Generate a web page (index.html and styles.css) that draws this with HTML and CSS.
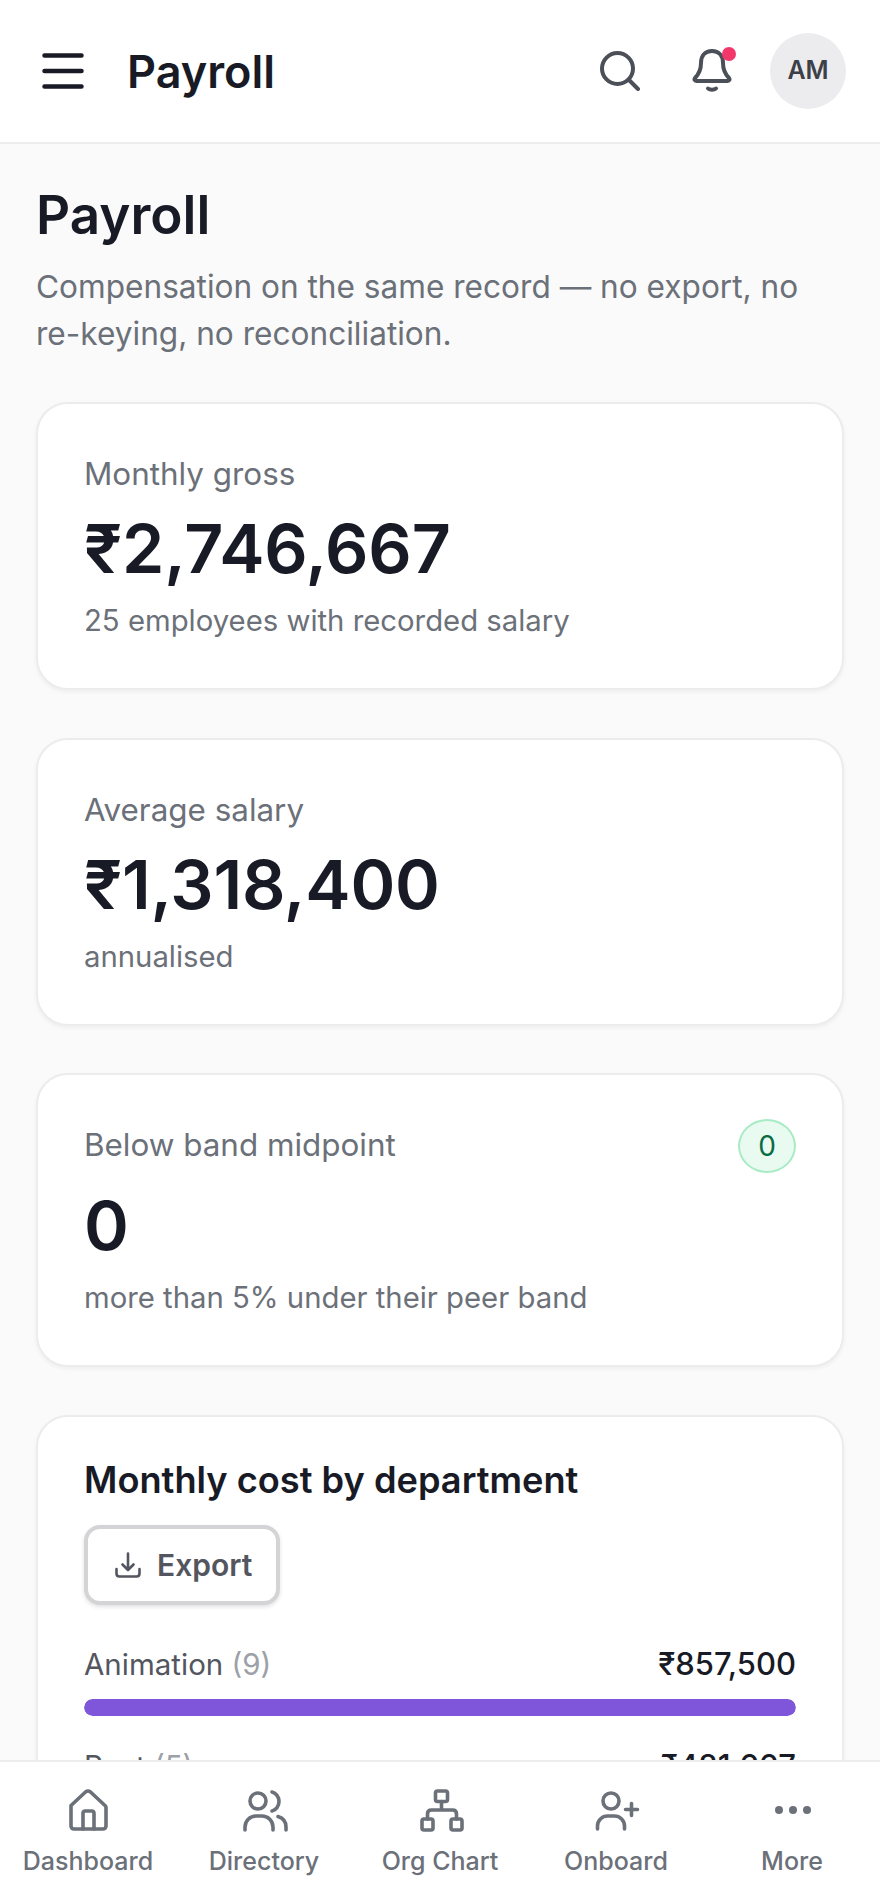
FILE: index.html
```html
<!DOCTYPE html>
<html lang="en">
<head>
    <meta charset="UTF-8">
    <meta name="viewport" content="width=device-width, initial-scale=1.0">
    <link rel="stylesheet" href="styles.css">
    <title>Payroll</title>
</head>
<body>
    <header class="topbar">
        <svg class="menu-icon" viewBox="0 0 42 36" fill="none" stroke="currentColor" stroke-width="4.500" stroke-linecap="round">
            <path d="M2.500 2.500h37M2.500 18h37M2.500 33.500h37"/>
        </svg>
        <div class="topbar-title">Payroll</div>
        <svg class="search-icon" viewBox="0 0 40 40" fill="none" stroke="currentColor" stroke-width="4" stroke-linecap="round">
            <circle cx="17.500" cy="17.500" r="15.500"/>
            <path d="M29 29l9 9"/>
        </svg>
        <div class="bell">
            <svg class="bell-icon" viewBox="0 0 40 44" fill="none" stroke="currentColor" stroke-width="4" stroke-linecap="round" stroke-linejoin="round">
                <path d="M20 2c-7 0-11 5-11 12 0 7-2 11-6 15-1 1.500-.5 3 1.500 3h31c2 0 2.500-1.500 1.500-3-4-4-6-8-6-15 0-7-4-12-11-12z"/>
                <path d="M16 39.500c2 1.500 6 1.500 8 0"/>
            </svg>
            <span class="bell-dot"></span>
        </div>
        <div class="avatar">AM</div>
    </header>

    <main class="content">
        <h1>Payroll</h1>
        <p class="intro">Compensation on the same record — no export, no <span class="nowrap">re-keying,</span> no reconciliation.</p>

        <section class="card">
            <div class="stat-label">Monthly gross</div>
            <div class="stat-value">₹2,746,667</div>
            <div class="stat-note">25 employees with recorded salary</div>
        </section>

        <section class="card">
            <div class="stat-label">Average salary</div>
            <div class="stat-value">₹1,318,400</div>
            <div class="stat-note">annualised</div>
        </section>

        <section class="card">
            <div class="stat-head">
                <div class="stat-label">Below band midpoint</div>
                <span class="pill">0</span>
            </div>
            <div class="stat-value">0</div>
            <div class="stat-note">more than 5% under their peer band</div>
        </section>

        <section class="card card-table">
            <h2>Monthly cost by department</h2>
            <button class="export" type="button">
                <svg class="export-icon" viewBox="0 0 26 26" fill="none" stroke="currentColor" stroke-width="2.600" stroke-linecap="round" stroke-linejoin="round">
                    <path d="M13 1.500v16M7.500 12.500l5.500 5.500 5.500-5.500M1.500 17v4.500c0 1.700 1.200 3 3 3h17c1.800 0 3-1.300 3-3V17"/>
                </svg>
                Export
            </button>
            <div class="dept">
                <div class="dept-row"><span>Animation <em>(9)</em></span><b>₹857,500</b></div>
                <div class="bar"><div class="bar-fill" style="width: 100%"></div></div>
            </div>
            <div class="dept">
                <div class="dept-row"><span>Post <em>(5)</em></span><b>₹481,667</b></div>
                <div class="bar"><div class="bar-fill" style="width: 56%"></div></div>
            </div>
        </section>
    </main>

    <nav class="tabs">
        <a class="tab">
            <svg viewBox="0 0 48 48" fill="none" stroke="currentColor" stroke-width="3.600" stroke-linecap="round" stroke-linejoin="round">
                <path d="M7 19.500L21.500 6c1.500-1.200 3.500-1.200 5 0L41 19.500c.7.700 1 1 1 2V40c0 1.700-1.300 3-3 3H10c-1.700 0-3-1.300-3-3V21.500c0-1 0-1.300 0-2z"/>
                <path d="M19 43V27c0-1 1-2 2-2h7c1 0 2 1 2 2v16"/>
            </svg>
            Dashboard
        </a>
        <a class="tab">
            <svg viewBox="0 0 48 48" fill="none" stroke="currentColor" stroke-width="3.600" stroke-linecap="round" stroke-linejoin="round">
                <circle cx="18" cy="15" r="8"/>
                <path d="M5 44v-3a11 11 0 0 1 11-11h6a11 11 0 0 1 11 11v3"/>
                <path d="M32 6c4 1 7 5 7 9.500s-3 8.500-7 9.500M38 30.500c5 1.500 8 5.500 8 10.500v3"/>
            </svg>
            Directory
        </a>
        <a class="tab">
            <svg viewBox="0 0 48 48" fill="none" stroke="currentColor" stroke-width="3.600" stroke-linecap="round" stroke-linejoin="round">
                <rect x="19.500" y="5" width="12" height="10.500" rx="2"/>
                <rect x="6" y="33" width="11" height="11" rx="2"/>
                <rect x="35" y="33" width="11" height="11" rx="2"/>
                <path d="M25.500 15.500V24M11.500 33v-5c0-2.500 1.500-4 4-4h21c2.500 0 4 1.500 4 4v5"/>
            </svg>
            Org Chart
        </a>
        <a class="tab">
            <svg viewBox="0 0 48 48" fill="none" stroke="currentColor" stroke-width="3.600" stroke-linecap="round" stroke-linejoin="round">
                <circle cx="19" cy="15" r="8"/>
                <path d="M5.500 43v-3a10 10 0 0 1 10-10h7a10 10 0 0 1 10 10v3"/>
                <path d="M39.500 17.500v12M33.500 23.500h12"/>
            </svg>
            Onboard
        </a>
        <a class="tab">
            <svg viewBox="0 0 48 48" fill="currentColor">
                <circle cx="11" cy="24" r="4"/>
                <circle cx="25" cy="24" r="4"/>
                <circle cx="39" cy="24" r="4"/>
            </svg>
            More
        </a>
    </nav>
</body>
</html>
```

FILE: styles.css
```css
* { box-sizing: border-box; }
html, body { margin: 0; height: 100%; }
body {
    display: flex;
    flex-direction: column;
    height: 1904px;
    overflow: hidden;
    background: #fafafa;
    color: #181b25;
    font-family: Inter, "Noto Sans", sans-serif;
}

.topbar {
    display: flex;
    align-items: center;
    flex: none;
    height: 144px;
    padding: 0 34px 0 42px;
    background: #fff;
    border-bottom: 2px solid #ececee;
}
.menu-icon { width: 42px; height: 36px; color: #181b25; }
.topbar-title { flex: 1; margin-left: 43px; font-size: 45px; font-weight: 600; }
.search-icon { width: 40px; height: 40px; margin-right: 52px; color: #4b4f58; }
.bell { position: relative; width: 40px; height: 44px; margin-right: 38px; }
.bell-icon { display: block; width: 40px; height: 44px; color: #4b4f58; }
.bell-dot {
    position: absolute;
    top: -2px;
    right: -4px;
    width: 14px;
    height: 14px;
    border-radius: 50%;
    background: #f2386b;
}
.avatar {
    display: flex;
    align-items: center;
    justify-content: center;
    width: 76px;
    height: 76px;
    padding-bottom: 2px;
    border-radius: 50%;
    background: #ececee;
    color: #3c4048;
    font-size: 25px;
    font-weight: 600;
}

.content {
    flex: 1;
    min-height: 0;
    overflow: hidden;
    padding: 40px 36px 0;
}
h1 { margin: 0; font-size: 53px; line-height: 62px; font-weight: 600; }
.intro { margin: 17px 0 45px; font-size: 31.600px; line-height: 47px; color: #6b7079; }
.nowrap { white-space: nowrap; }

.card {
    margin-bottom: 47.500px;
    padding: 47px 46px 46px;
    background: #fff;
    border: 2px solid #ececee;
    border-radius: 32px;
    box-shadow: 0 2px 4px rgba(0, 0, 0, 0.05);
}
.stat-head { display: flex; justify-content: space-between; align-items: flex-start; }
.stat-label { font-size: 31.400px; line-height: 46px; color: #6b7079; }
.stat-value { margin-top: 9px; font-size: 68px; line-height: 84px; font-weight: 600; letter-spacing: -0.2px; }
.stat-note { margin-top: 10px; font-size: 29.300px; line-height: 42px; color: #6b7079; }
.pill {
    display: flex;
    align-items: center;
    justify-content: center;
    width: 58px;
    height: 54px;
    margin: -3px 0 1px;
    border: 2px solid #a8ebc4;
    border-radius: 50%;
    background: #e9fbf0;
    color: #0a6b45;
    font-size: 28px;
}

.card-table { padding-top: 41px; }
h2 { margin: 0; font-size: 36.200px; line-height: 44px; font-weight: 600; }
.export {
    display: flex;
    align-items: center;
    gap: 16px;
    height: 80px;
    margin-top: 23px;
    padding: 0 24px 0 27px;
    background: #fff;
    border: 4px solid #d4d4d6;
    border-radius: 16px;
    box-shadow: 0 2px 4px rgba(0, 0, 0, 0.12);
    color: #53565e;
    font: 600 30px Inter, sans-serif;
}
.export-icon { width: 26px; height: 26px; }
.dept { margin-top: 30px; }
.export + .dept { margin-top: 39px; }
.dept-row { display: flex; justify-content: space-between; font-size: 29.500px; line-height: 40px; color: #53565e; }
.dept-row em { font-style: normal; color: #9ca0a7; }
.dept-row b { font-size: 31px; font-weight: 500; color: #181b25; }
.bar { height: 17px; margin-top: 15px; border-radius: 9px; overflow: hidden; }
.bar-fill { height: 100%; background: #7f56d9; border-radius: 9px; }

.tabs {
    display: flex;
    flex: none;
    height: 144px;
    background: #fff;
    border-top: 2px solid #ececee;
}
.tab {
    display: flex;
    flex: 1;
    flex-direction: column;
    align-items: center;
    padding-top: 24px;
    color: #6b7079;
    font-size: 25px;
    line-height: 30px;
    font-weight: 500;
}
.tab svg { width: 48px; height: 48px; margin-bottom: 12px; }
```
